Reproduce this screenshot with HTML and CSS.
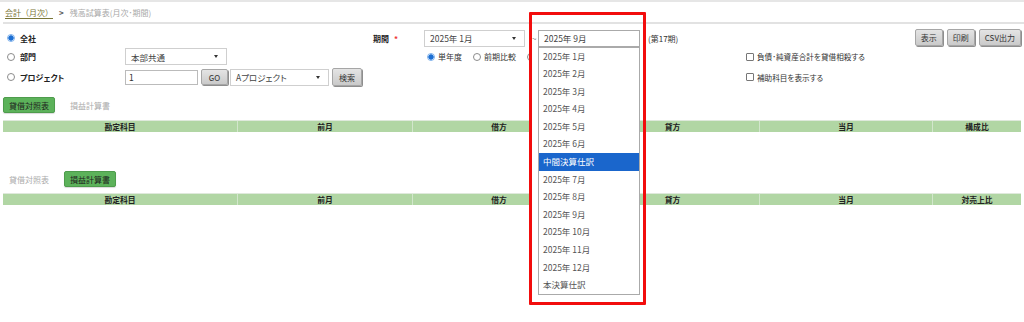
FILE: index.html
```html
<!DOCTYPE html>
<html lang="ja">
<head>
  <meta charset="UTF-8">
  <title>残高試算表(月次･期間)</title>
  <link rel="stylesheet" href="styles.css">
</head>
<body>
  <div class="page">
    <div class="crumbs">
      <a class="crumb-link">会計（月次）</a>
      <span class="crumb-sep">&gt;</span>
      <span class="crumb-cur">残高試算表(月次･期間)</span>
    </div>

    <div class="filters">
      <!-- row 1 -->
      <label class="opt strong r1 c1"><span class="radio on"></span>全社</label>
      <div class="field-label r1 c3">期間<span class="req">*</span></div>
      <div class="sel r1 c4"><span>2025年 1月</span><span class="caret"></span></div>
      <div class="tilde r1 c5">~</div>
      <div class="sel open r1 c6">
        <span>2025年 9月</span>
        <ul class="menu">
          <li>2025年 1月</li>
          <li>2025年 2月</li>
          <li>2025年 3月</li>
          <li>2025年 4月</li>
          <li>2025年 5月</li>
          <li>2025年 6月</li>
          <li class="hl">中間決算仕訳</li>
          <li>2025年 7月</li>
          <li>2025年 8月</li>
          <li>2025年 9月</li>
          <li>2025年 10月</li>
          <li>2025年 11月</li>
          <li>2025年 12月</li>
          <li>本決算仕訳</li>
        </ul>
      </div>
      <div class="term r1 c7">(第17期)</div>
      <div class="actions r1 c9">
        <button class="btn">表示</button>
        <button class="btn">印刷</button>
        <button class="btn">CSV出力</button>
      </div>

      <!-- row 2 -->
      <label class="opt strong r2 c1"><span class="radio"></span>部門</label>
      <div class="sel dept r2 c2"><span>本部共通</span><span class="caret"></span></div>
      <div class="radios r2 span-period">
        <label class="opt"><span class="radio on"></span>単年度</label>
        <label class="opt"><span class="radio"></span>前期比較</label>
        <label class="opt"><span class="radio"></span></label>
      </div>
      <label class="check r2 c8"><span class="box"></span>負債･純資産合計を貸借相殺する</label>

      <!-- row 3 -->
      <label class="opt strong r3 c1"><span class="radio"></span>プロジェクト</label>
      <div class="proj r3 c2">
        <div class="txt">1</div>
        <button class="btn go">GO</button>
        <div class="sel pj"><span>Aプロジェクト</span><span class="caret"></span></div>
        <button class="btn find">検索</button>
      </div>
      <label class="check r3 c8"><span class="box"></span>補助科目を表示する</label>
    </div>

    <section class="report">
      <div class="tabs">
        <span class="tab active">貸借対照表</span>
        <span class="tab">損益計算書</span>
      </div>
      <div class="thead">
        <div class="th">勘定科目</div>
        <div class="th">前月</div>
        <div class="th">借方</div>
        <div class="th">貸方</div>
        <div class="th">当月</div>
        <div class="th">構成比</div>
      </div>
      <div class="tbody"></div>
    </section>

    <section class="report">
      <div class="tabs">
        <span class="tab">貸借対照表</span>
        <span class="tab active">損益計算書</span>
      </div>
      <div class="thead">
        <div class="th">勘定科目</div>
        <div class="th">前月</div>
        <div class="th">借方</div>
        <div class="th">貸方</div>
        <div class="th">当月</div>
        <div class="th">対売上比</div>
      </div>
    </section>

    <div class="callout"></div>
  </div>
</body>
</html>
```

FILE: styles.css
```css
html, body {
  margin: 0;
  padding: 0;
  background: #fff;
}
body {
  font-family: "Noto Sans CJK JP", "Noto Sans", sans-serif;
  font-size: 8px;
  color: #333;
  font-feature-settings: "palt";
  overflow: hidden;
}
.page {
  position: relative;
  width: 1024px;
  height: 322px;
  border-top: 2px solid #e6e6e6;
  box-sizing: border-box;
}

/* breadcrumb */
.crumbs {
  height: 22px;
  margin: 0 0 0 3px;
  padding-left: 2px;
  display: flex;
  align-items: center;
  gap: 6px;
  border-bottom: 2px solid #e2e2e2;
  box-sizing: border-box;
}
.crumb-link {
  color: #7a7638;
  text-decoration: underline;
  text-underline-offset: 2px;
  font-feature-settings: normal;
}
.crumb-sep {
  color: #555;
  font-weight: bold;
}
.crumb-cur {
  color: #a8a8a8;
}

/* filter grid */
.filters {
  margin-top: 5px;
  padding: 0 3px 0 7px;
  display: grid;
  grid-template-columns: 117px 249px 51px 103px 11px 102px 106px 1fr auto;
  grid-template-rows: 18px 19px 22px;
  align-items: center;
}
.r1 { grid-row: 1; }
.r2 { grid-row: 2; }
.r3 { grid-row: 3; }
.c1 { grid-column: 1; }
.c2 { grid-column: 2; }
.c3 { grid-column: 3; }
.c4 { grid-column: 4; }
.c5 { grid-column: 5; }
.c6 { grid-column: 6; }
.c7 { grid-column: 7; }
.c8 { grid-column: 8; }
.c9 { grid-column: 9; }
.span-period { grid-column: 4 / 7; }

.opt {
  display: inline-flex;
  align-items: center;
  gap: 5px;
  color: #333;
}
.opt.strong {
  font-weight: bold;
  color: #222;
  gap: 5px;
}
.radio {
  width: 8px;
  height: 8px;
  border: 1px solid #8c8c8c;
  border-radius: 50%;
  background: #fff;
  box-sizing: border-box;
  flex: none;
}
.radio.on {
  border-color: #7fb2ec;
  background: radial-gradient(circle, #1d6fd3 0 2.4px, #d7e7fa 2.9px);
}
.radios {
  display: flex;
  gap: 11px;
  padding-left: 3px;
}
.radios .opt { gap: 3px; }

.field-label {
  font-weight: bold;
  color: #222;
}
.req {
  color: #e33;
  margin-left: 5px;
}
.tilde {
  color: #777;
  padding-left: 5px;
}
.term {
  padding-left: 8px;
  color: #333;
}

.sel {
  position: relative;
  height: 17px;
  border: 1px solid #cfcfcf;
  background: #fff;
  box-sizing: border-box;
  display: flex;
  align-items: center;
  justify-content: space-between;
  padding: 0 8px 0 5px;
  font-size: 8.5px;
  color: #444;
  width: 101px;
}
.sel.dept {
  width: 102px;
  margin-left: 1px;
}
.caret {
  width: 0;
  height: 0;
  border-left: 2px solid transparent;
  border-right: 2px solid transparent;
  border-top: 3px solid #333;
}
.sel.open {
  width: 102px;
  border-color: #aaa;
  z-index: 2;
}
.menu {
  position: absolute;
  top: 16px;
  left: -1px;
  width: 102px;
  margin: 0;
  padding: 0;
  list-style: none;
  background: #fff;
  border: 1px solid #aaa;
  box-sizing: border-box;
  box-shadow: -6px 0 0 #fff;
}
.menu li {
  height: 17.6px;
  line-height: 17.6px;
  padding-left: 4px;
  color: #555;
  font-size: 8.5px;
}
.menu li.hl {
  background: #1a66cc;
  color: #fff;
}

.actions {
  display: flex;
  gap: 4px;
  align-self: start;
}
.btn {
  font: inherit;
  font-size: 8px;
  color: #333;
  height: 17px;
  padding: 0 5px;
  border: 1px solid #a6a6a6;
  border-radius: 2px;
  background: linear-gradient(#e4e4e4, #cacaca);
  box-shadow: 1px 1px 0 #8e8e8e;
  cursor: pointer;
}
.actions .btn { min-width: 27px; }

.proj {
  display: flex;
  align-items: center;
  padding-left: 1px;
}
.txt {
  width: 73px;
  height: 15px;
  border: 1px solid #bbb;
  box-sizing: border-box;
  padding-left: 3px;
  font-size: 8.5px;
  line-height: 13px;
  color: #333;
}
.btn.go {
  width: 27px;
  margin-left: 3px;
  height: 16px;
}
.sel.pj {
  width: 99px;
  margin-left: 2px;
}
.btn.find {
  width: 30px;
  margin-left: 3px;
  height: 18px;
}

.check {
  display: inline-flex;
  align-items: center;
  gap: 3px;
  font-size: 7.6px;
  color: #333;
}
.box {
  width: 8px;
  height: 8px;
  border: 1px solid #777;
  border-radius: 1px;
  box-sizing: border-box;
  background: #fff;
}

/* report tables */
.report {
  margin: 0 3px;
}
.report:first-of-type { margin-top: 9px; }
.tabs {
  display: flex;
  gap: 9px;
  height: 16px;
  margin-bottom: 7px;
}
.report + .report .tabs { margin-bottom: 6px; }
.tab {
  width: 52px;
  box-sizing: border-box;
  display: flex;
  align-items: center;
  justify-content: center;
  color: #ababab;
}
.tab.active {
  background: #5cb25a;
  border: 1px solid #4e9c4c;
  border-radius: 2px;
  color: #1e1e1e;
  box-shadow: 0 1px 1px rgba(0,0,0,0.15);
}
.thead {
  display: grid;
  grid-template-columns: 234px 175px 173px 174px 173px 1fr;
  height: 12px;
  background: #b1d6a4;
  border-top: 1px solid #dfe9dc;
  box-sizing: border-box;
}
.th {
  display: flex;
  align-items: center;
  justify-content: center;
  font-weight: bold;
  color: #222;
  font-size: 7.8px;
  border-left: 1px solid #d2e6cc;
}
.th:first-child { border-left: none; }
.tbody {
  height: 39px;
}

/* annotation frame */
.callout {
  position: absolute;
  left: 529px;
  top: 10px;
  width: 117px;
  height: 293px;
  border: 3px solid #f20d0d;
  border-radius: 1px;
  box-sizing: border-box;
  z-index: 3;
  pointer-events: none;
}
```
